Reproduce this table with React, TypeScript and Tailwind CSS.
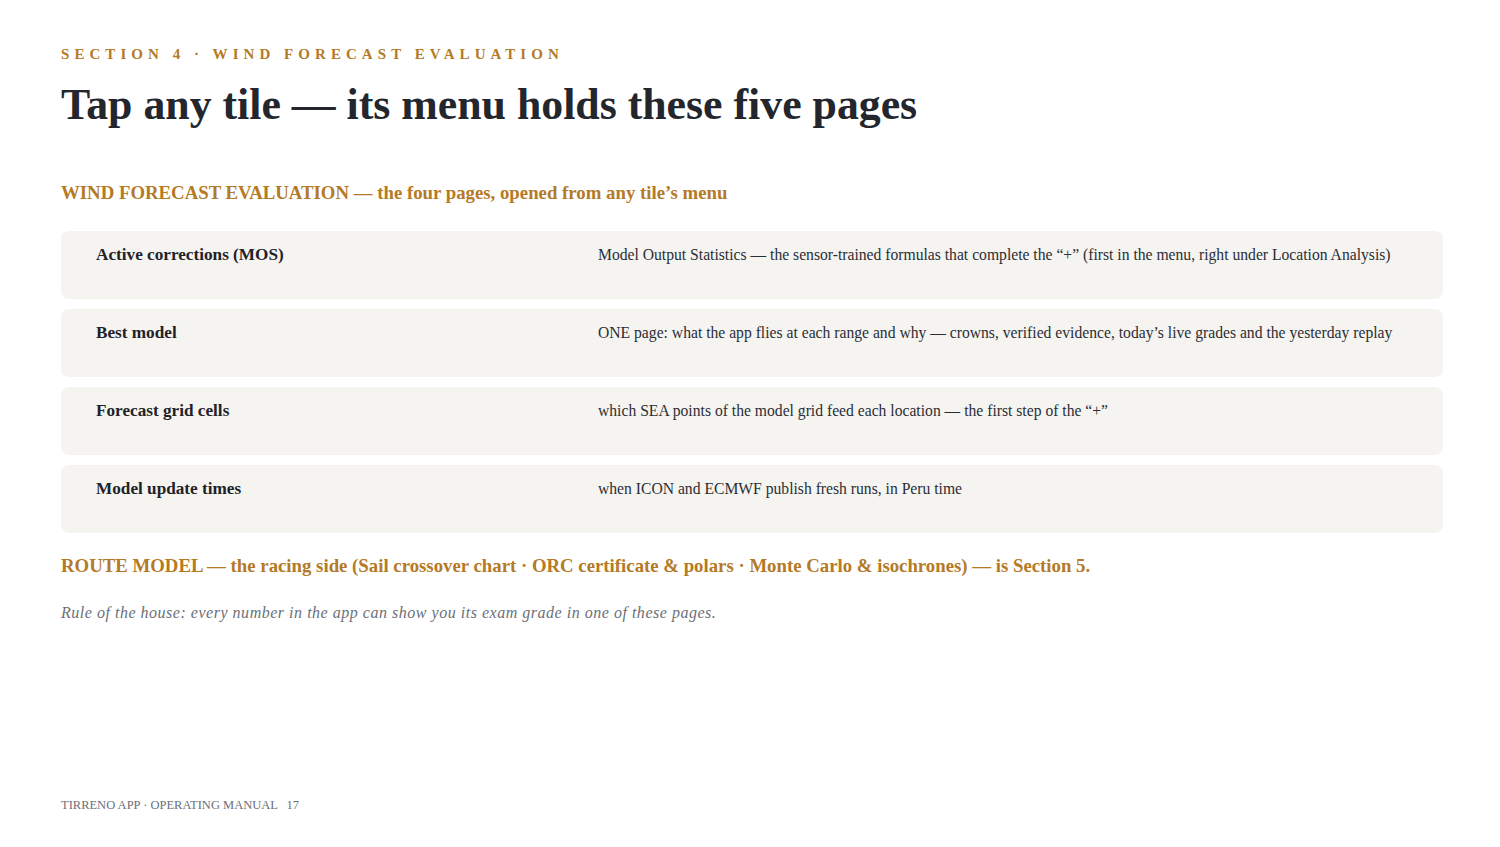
import React from "react";

const rows = [
  ["Active corrections (MOS)", "Model Output Statistics — the sensor-trained formulas that complete the “+” (first in the menu, right under Location Analysis)"],
  ["Best model", "ONE page: what the app flies at each range and why — crowns, verified evidence, today’s live grades and the yesterday replay"],
  ["Forecast grid cells", "which SEA points of the model grid feed each location — the first step of the “+”"],
  ["Model update times", "when ICON and ECMWF publish fresh runs, in Peru time"],
];

export default function App() {
  return (
    <div className="w-[1500px] h-[847px] bg-white flex flex-col pl-[61px] pr-[57px] pt-[44px] pb-[34px]" style={{ fontFamily: '"Liberation Serif", "Times New Roman", serif' }}>
      <div className="text-[15px] font-bold tracking-[5.05px] text-[#b57a26] leading-[20px]">SECTION 4 · WIND FORECAST EVALUATION</div>
      <h1 className="mt-[14px] text-[43.8px] font-bold text-[#23262d] leading-[52px]">Tap any tile — its menu holds these five pages</h1>
      <div className="mt-[51px] text-[18.8px] font-bold text-[#b57a26] leading-[24px]">WIND FORECAST EVALUATION — the four pages, opened from any tile’s menu</div>
      <div className="mt-[26px] flex flex-col gap-[10px]">
        {rows.map(([a, b]) => (
          <div key={a} className="h-[68px] rounded-[8px] bg-[#f5f4f1] grid grid-cols-[502px_1fr] px-[35px] pt-[13px]">
            <div className="text-[17.2px] font-bold text-[#1f2228] leading-[22px]">{a}</div>
            <div className="text-[15.65px] text-[#2b2e35] leading-[22px]">{b}</div>
          </div>
        ))}
      </div>
      <div className="mt-[21px] text-[18.8px] font-bold text-[#b57a26] leading-[24px]">ROUTE MODEL — the racing side (Sail crossover chart · ORC certificate &amp; polars · Monte Carlo &amp; isochrones) — is Section 5.</div>
      <div className="mt-[24px] text-[16px] italic text-[#6b6f78] tracking-[0.52px] leading-[22px]">Rule of the house: every number in the app can show you its exam grade in one of these pages.</div>
      <div className="mt-auto text-[12.5px] text-[#6b6f78] leading-[16px]">TIRRENO APP · OPERATING MANUAL <span className="ml-[6px]">17</span></div>
    </div>
  );
}
